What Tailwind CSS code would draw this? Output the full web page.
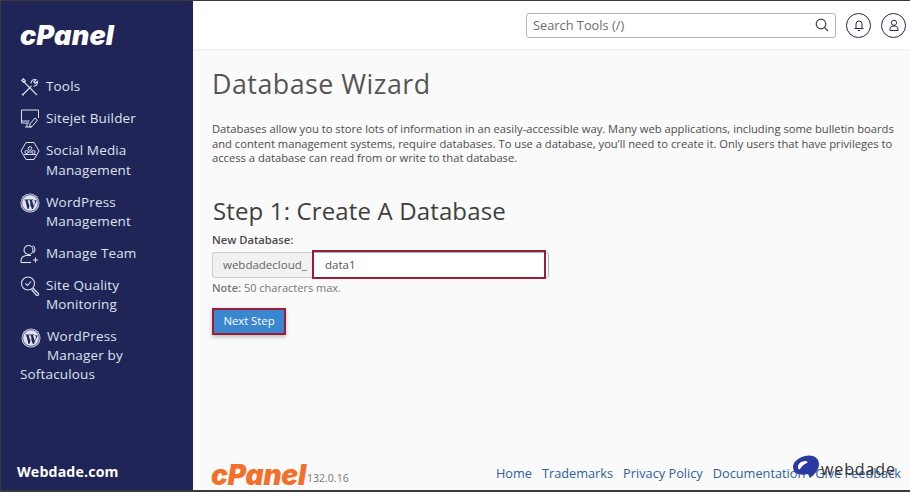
<!DOCTYPE html>
<html lang="en">
<head>
  <meta charset="UTF-8">
  <title>Database Wizard</title>
  <script src="https://cdn.jsdelivr.net/npm/@tailwindcss/browser@4"></script>
</head>
<body class="w-[910px] h-[492px] overflow-hidden bg-[#3a3a3a] pt-px pl-px pb-[2px] font-['Open_Sans',sans-serif]">
  <div class="flex h-[489px] w-[909px]">
    <!-- sidebar -->
    <aside class="w-[192px] shrink-0 bg-[#1f2556] flex flex-col text-[#dde1f0] text-[13.5px] leading-[19px] tracking-[0.15px]">
      <div class="h-[75px] pl-[19px] pt-[21px]">
        <span class="block font-['Inter',sans-serif] font-black italic text-white text-[27px] leading-[28px] tracking-[0.2px]">cPanel</span>
      </div>
      <nav class="flex flex-col pl-[19px] pr-2">
        <a class="flex items-start gap-[6px] h-[32px] pt-[1px]">
          <svg class="w-[20px] h-[20px] shrink-0" viewBox="0 0 20 20" fill="none" stroke="currentColor" stroke-width="1.100"><path d="M3 17.500 L11.500 9"/><path d="M2 17l1.500 1.500"/><path d="M11 6.500C10.800 4 13 2 16 2.700L13.800 5l1.500 1.500 2.200-2.200C18 7 16 9.300 13.500 9"/><path d="M3 4L17 18"/><path d="M1.800 3.500L3.500 1.800 5.500 4 4 5.500z"/></svg>
          <span>Tools</span>
        </a>
        <a class="flex items-start gap-[6px] h-[32px] pt-[1px]">
          <svg class="w-[20px] h-[20px] shrink-0" viewBox="0 0 20 20" fill="none" stroke="currentColor" stroke-width="1"><path d="M9 14H1.500V1h17v8"/><path d="M1.500 12h8"/><path d="M5 18h7M7 14v4"/><path d="M10 15l5-6 2.500 2-5 6-3 1z" fill="#1f2556"/></svg>
          <span>Sitejet Builder</span>
        </a>
        <a class="flex items-start gap-[6px] h-[52px]">
          <svg class="w-[20px] h-[20px] mt-[1px] shrink-0" viewBox="0 0 20 20" fill="none" stroke="currentColor" stroke-width="1"><path d="M6 1.500h8L19 10l-5 8.500H6L1 10z"/><circle cx="6.500" cy="11" r="1.600"/><circle cx="13.500" cy="11" r="1.600"/><circle cx="10" cy="7.500" r="1.800"/><path d="M4 13.500h12M8 11h4"/></svg>
          <span class="leading-[20px]">Social Media<br>Management</span>
        </a>
        <a class="flex items-start gap-[6px] h-[51px] pt-[1px]">
          <svg class="w-[20px] h-[20px] shrink-0" viewBox="0 0 20 20"><circle cx="10" cy="10" r="9.500" fill="#dde1f0"/><circle cx="10" cy="10" r="8.300" fill="none" stroke="#1f2556" stroke-width=".7"/><path d="M4.500 6.500h4.200v.7H7.500l2 6 1-3-.8-3h-.9v-.7h4.300v.7h-1.200l2 6 1-3.200c.4-1.300-.1-2.200-.8-2.800h2.300l-.1 1.200L12.800 16h-.9l-1.700-4.800L8.400 16h-.9L5.300 7.200H4.500z" fill="#1f2556"/></svg>
          <span>WordPress<br>Management</span>
        </a>
        <a class="flex items-start gap-[6px] h-[32px] pt-[1px]">
          <svg class="w-[20px] h-[20px] shrink-0" viewBox="0 0 20 20" fill="none" stroke="currentColor" stroke-width="1.100"><circle cx="8.500" cy="6" r="4.500"/><path d="M1 18.500v-1.500c0-3 2.500-5 5-5.500h5"/><path d="M1 18.500h10"/><path d="M12.500 1.800c2.500.8 3.500 4.500 1 7"/><path d="M15.500 13.500v5M13 16h5"/></svg>
          <span>Manage Team</span>
        </a>
        <a class="flex items-start gap-[6px] h-[52px] pt-[1px]">
          <svg class="w-[20px] h-[20px] shrink-0" viewBox="0 0 20 20" fill="none" stroke="currentColor" stroke-width="1.100"><circle cx="8" cy="7.500" r="6.500"/><path d="M5.500 7.500l2 2 3.500-4"/><path d="M12.800 12l5.500 5.500a1.300 1.300 0 0 1-1.800 1.800L11.500 13.500" stroke-width="1.300"/></svg>
          <span>Site Quality<br>Monitoring</span>
        </a>
        <a class="block relative pl-[27px]">
          <svg class="absolute left-[1px] top-[1px] w-[20px] h-[20px]" viewBox="0 0 20 20"><circle cx="10" cy="10" r="9.500" fill="#dde1f0"/><circle cx="10" cy="10" r="8.300" fill="none" stroke="#1f2556" stroke-width=".7"/><path d="M4.500 6.500h4.200v.7H7.500l2 6 1-3-.8-3h-.9v-.7h4.300v.7h-1.200l2 6 1-3.200c.4-1.300-.1-2.200-.8-2.800h2.300l-.1 1.200L12.800 16h-.9l-1.700-4.800L8.400 16h-.9L5.300 7.200H4.500z" fill="#1f2556"/></svg>
          <span>WordPress<br>Manager by</span>
        </a>
        <span class="block">Softaculous</span>
      </nav>
      <div class="mt-auto pl-[16px] pb-[8px] text-white font-bold text-[14.2px] leading-[20px]">Webdade.com</div>
    </aside>

    <!-- main -->
    <div class="flex-1 min-w-0 flex flex-col bg-[#fafafa]">
      <header class="h-[48px] shrink-0 bg-white shadow-[0_1px_2px_rgba(0,0,0,0.06)] flex items-center justify-end gap-[10px] pr-[4px]">
        <div class="w-[310px] h-[25px] flex items-center justify-between border border-[#b5b5b5] rounded-[3px] bg-white pl-[6px] pr-[6px]">
          <span class="pt-px text-[12.8px] text-[#6d6d6d]">Search Tools (/)</span>
          <svg class="w-[14px] h-[14px]" viewBox="0 0 14 14" fill="none" stroke="#444" stroke-width="1.200"><circle cx="6" cy="6" r="4.800"/><path d="M9.500 9.500L13 13"/></svg>
        </div>
        <div class="w-[25px] h-[25px] rounded-full border border-[#25294f] flex items-center justify-center">
          <svg class="w-[12px] h-[13px]" viewBox="0 0 12 13" fill="none" stroke="#25294f" stroke-width="1"><path d="M3 9V5a3 3 0 0 1 6 0v4"/><path d="M1.500 9.500h9"/><path d="M5 11.500h2"/></svg>
        </div>
        <div class="w-[25px] h-[25px] rounded-full border border-[#25294f] flex items-center justify-center">
          <svg class="w-[12px] h-[13px]" viewBox="0 0 12 13" fill="none" stroke="#25294f" stroke-width="1"><circle cx="6" cy="3.800" r="2.600"/><path d="M2 11.500v-1.500c0-1.700 1.500-3 4-3s4 1.300 4 3v1.500z"/></svg>
        </div>
      </header>

      <main class="flex-1 min-h-0 pl-[19px] pr-[14px] pt-[15px] text-[#4a4a4a]">
        <h1 class="text-[26.8px] leading-[40px] tracking-[0.5px] text-[#555]">Database Wizard</h1>
        <p class="mt-[18px] text-[11.2px] leading-[14.600px] text-[#4d4d4d]">Databases allow you to store lots of information in an easily-accessible way. Many web applications, including some bulletin boards and content management systems, require databases. To use a database, you’ll need to create it. Only users that have privileges to access a database can read from or write to that database.</p>
        <h2 class="mt-[29px] ml-px text-[24px] leading-[32px] tracking-[0.14px] text-[#3f3f3f]">Step 1: Create A Database</h2>
        <label class="block mt-[5px] text-[11.2px] leading-[15px] font-semibold text-[#4a4a4a]">New Database:</label>
        <div class="mt-[5px] flex w-[337px] h-[26px]">
          <span class="w-[101px] shrink-0 flex items-center pl-[10px] bg-[#f1f1f1] border border-[#ccc] border-r-0 rounded-l-[3px] text-[11.5px] text-[#666]">webdadecloud_</span>
          <div class="relative flex-1 bg-white border border-[#8db8e0] rounded-r-[3px] flex items-center pl-[11px] text-[11.5px] text-[#555]">
            data1
            <div class="absolute left-[-2px] top-[-3px] w-[234px] h-[29px] border-[2px] border-[#9b1c34]"></div>
          </div>
        </div>
        <p class="mt-[2px] text-[11px] leading-[15px] text-[#777]"><b class="font-semibold">Note:</b> 50 characters max.</p>
        <button class="mt-[13px] block w-[74px] h-[27px] bg-[#3a87d0] border-[2px] border-[#9b1c34] text-white text-[11.3px] shadow-[0_2px_4px_rgba(0,0,0,0.25)]">Next Step</button>
      </main>

      <footer class="relative h-[30px] shrink-0 flex items-end pl-[18px] pr-[9px] pb-[1px]">
        <span class="font-['Inter',sans-serif] font-black italic text-[#f2702a] text-[28px] leading-[28px] tracking-[-0.2px]">cPanel</span>
        <span class="ml-[1px] mb-[3px] text-[10.5px] leading-[15px] text-[#777]">132.0.16</span>
        <div class="ml-auto flex gap-[10px] text-[12.75px] leading-[20px] text-[#2f5f9e] mb-[6px]">
          <a>Home</a><a>Trademarks</a><a>Privacy Policy</a><a>Documentation</a><a>Give Feedback</a>
        </div>
        <div class="absolute left-[599px] top-[-6px] flex items-center">
          <svg class="w-[28px] h-[24px]" viewBox="0 0 28 24"><path d="M13 1c7-2 14 1 14 8 0 6-5 11-9 14l-2-4C9 21 1 19 1 12 1 7 6 3 13 1z" fill="#2b3aa0"/><path d="M6 12c0-4 4-6 8-6 1 0 2 1 1 2-3 1-5 3-7 6-1 1-2 0-2-2z" fill="#fff"/></svg>
          <span class="ml-[1px] mt-[5px] text-[16px] leading-[20px] text-[#333] tracking-[0.9px]">webdade</span>
        </div>
      </footer>
    </div>
  </div>
</body>
</html>
